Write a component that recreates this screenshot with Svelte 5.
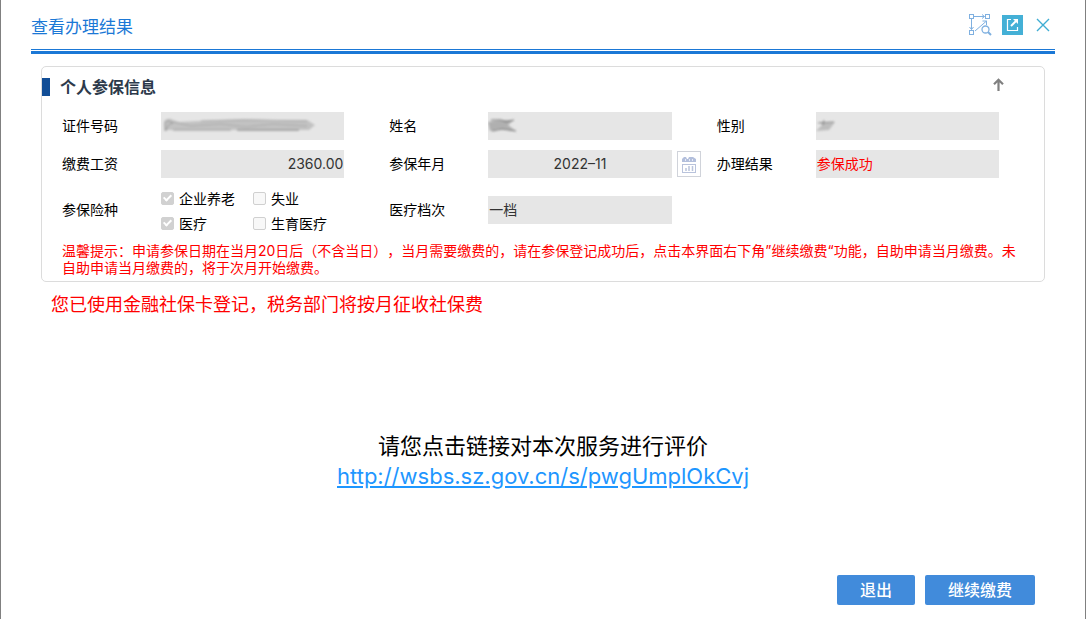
<script>
  let collapsed = $state(false);

  const insurances = [
    { id: "pension", label: "企业养老", checked: true },
    { id: "unemployment", label: "失业", checked: false },
    { id: "medical", label: "医疗", checked: true },
    { id: "maternity", label: "生育医疗", checked: false },
  ];

  const link = "http://wsbs.sz.gov.cn/s/pwgUmplOkCvj";

  function toggle() {
    collapsed = !collapsed;
  }
</script>

<div class="dialog">
  <header class="dialog-header">
    <h1>查看办理结果</h1>
    <div class="tools">
      <button type="button" class="tool" aria-label="流程图">
        <svg width="23" height="22" viewBox="0 0 23 22" fill="none" stroke="#7fb0e0">
          <rect x="0.5" y="0.5" width="4" height="4" />
          <rect x="16.5" y="0.5" width="4" height="4" />
          <rect x="0.5" y="16.5" width="4" height="4" />
          <path d="M5 2.5H15.500M13 0.500L15.500 2.500L13 4.500M2.500 5V15.500M0.500 13L2.500 15.500L4.500 13M6 17L17.500 7M13.500 7H17.500V11" />
          <circle cx="16.5" cy="15.5" r="3.5" stroke-width="1.3" />
          <path d="M19 18L22 21" stroke-width="2" />
        </svg>
      </button>
      <button type="button" class="tool open" aria-label="新窗口打开">
        <svg width="21" height="20" viewBox="0 0 21 20" fill="none" stroke="#fff" stroke-width="1.2">
          <path d="M9 4.500H5.500V15.500H15.500V12" />
          <path d="M9 11L14 6" stroke-width="2" />
          <path d="M11 4H16V9Z" fill="#fff" stroke="none" />
        </svg>
      </button>
      <button type="button" class="tool close" aria-label="关闭">
        <svg width="14" height="14" viewBox="0 0 14 14" fill="none" stroke="#3fadd3" stroke-width="1.4">
          <path d="M1 1L13 13M13 1L1 13" />
        </svg>
      </button>
    </div>
  </header>

  <main>
    <section class="card">
      <div class="card-header">
        <h2>个人参保信息</h2>
        <button type="button" class="toggle" aria-label="收起" aria-expanded={!collapsed} onclick={toggle}>
          <svg width="11" height="14" viewBox="0 0 11 14" fill="none" stroke="#808080" stroke-width="2.2">
            <path d="M5.5 13V2M1 6.2L5.5 1.7L10 6.2" />
          </svg>
        </button>
      </div>

      {#if !collapsed}
        <div class="form">
          <div class="item">
            <label for="idno">证件号码</label>
            <div class="field">
              <input id="idno" type="text" readonly />
              <svg class="smudge" width="160" height="20" viewBox="0 0 160 20" fill="none" aria-hidden="true">
                <defs>
                  <filter id="soft" x="-10%" y="-30%" width="120%" height="160%">
                    <feGaussianBlur stdDeviation="0.8" />
                  </filter>
                </defs>
                <g filter="url(#soft)">
                  <path d="M3 5Q7 1 12 4L18 6L38 5L56 4L82 3L112 4L146 4L154 9L148 14L110 14L84 14L40 14L14 14L4 14Z" fill="#c2c2c2" />
                  <path d="M4 15V7Q7 3 12 7Q6 8 5 15M12 14L36 14L70 14" stroke="#999" />
                  <path d="M12 6L30 10L60 8L85 11L112 8L146 10M40 5L88 4L146 5" stroke="#aaa" />
                  <path d="M76 14L102 14L138 14" stroke="#777" />
                </g>
              </svg>
            </div>
            <div class="after"></div>
          </div>

          <div class="item">
            <label for="name">姓名</label>
            <div class="field">
              <input id="name" type="text" readonly />
              <svg class="smudge" width="32" height="20" viewBox="0 0 32 20" fill="none" aria-hidden="true">
                <g filter="url(#soft)">
                  <path d="M0 6L14 4L26 4L20 9L28 15L12 13L2 15Z" fill="#b0b0b0" />
                  <path d="M3 4H13L18 6L26 4M4 15L14 13L28 15" stroke="#757575" />
                </g>
              </svg>
            </div>
            <div class="after"></div>
          </div>

          <div class="item">
            <label for="gender">性别</label>
            <div class="field">
              <input id="gender" type="text" readonly />
              <svg class="smudge" width="24" height="20" viewBox="0 0 24 20" fill="none" aria-hidden="true">
                <g filter="url(#soft)">
                  <path d="M4 6L19 6L13 14L0 15L6 9Z" fill="#bdbdbd" />
                  <path d="M2 7L18 6M8 4L7 9" stroke="#858585" />
                </g>
              </svg>
            </div>
            <div class="after"></div>
          </div>

          <div class="item">
            <label for="wage">缴费工资</label>
            <div class="field">
              <input id="wage" class="right" type="text" value="2360.00" readonly />
            </div>
            <div class="after"></div>
          </div>

          <div class="item">
            <label for="month">参保年月</label>
            <div class="field">
              <input id="month" class="center" type="text" value="2022–11" readonly />
            </div>
            <div class="after">
              <button type="button" class="calendar" aria-label="选择日期">
                <svg width="14" height="17" viewBox="0 0 14 17" fill="none" stroke="#b9c3dc">
                  <path d="M0 6V3L2 1H4L5 3H6L7 1H11L14 3V6Z" fill="#b3bfdc" stroke="none" />
                  <path d="M3.5 3V5M7.5 3V5M10.5 3V5" stroke="#e8ecf6" />
                  <rect x="0.5" y="8.5" width="13" height="8" />
                  <path d="M4 12V15M7 10V15M10.5 10V15" stroke-width="1.5" />
                </svg>
              </button>
            </div>
          </div>

          <div class="item">
            <label for="result">办理结果</label>
            <div class="field">
              <input id="result" class="red" type="text" value="参保成功" readonly />
            </div>
            <div class="after"></div>
          </div>

          <div class="item tall" role="group" aria-labelledby="types">
            <span id="types" class="label">参保险种</span>
            <div class="checks">
              {#each insurances as item}
                <label class="check" for={item.id}>
                  <input id={item.id} type="checkbox" checked={item.checked} disabled />
                  {item.label}
                </label>
              {/each}
            </div>
          </div>

          <div class="item tall">
            <label for="level">医疗档次</label>
            <div class="field">
              <input id="level" type="text" value="一档" readonly />
            </div>
            <div class="after"></div>
          </div>
        </div>

        <p class="tip">
          温馨提示：申请参保日期在当月20日后（不含当日），当月需要缴费的，请在参保登记成功后，点击本界面右下角”继续缴费“功能，自助申请当月缴费。未自助申请当月缴费的，将于次月开始缴费。
        </p>
      {/if}
    </section>

    <p class="notice">您已使用金融社保卡登记，税务部门将按月征收社保费</p>

    <div class="survey">
      <p>请您点击链接对本次服务进行评价</p>
      <a href={link}>{link}</a>
    </div>
  </main>

  <footer class="actions">
    <button type="button">退出</button>
    <button type="button">继续缴费</button>
  </footer>
</div>

<style>
  :global(body) {
    margin: 0;
    background: #fff;
    color: #000;
    font-family: Inter, "Noto Sans CJK SC", sans-serif;
    font-size: 14px;
  }

  h1,
  h2,
  p {
    margin: 0;
  }

  button {
    padding: 0;
    border: none;
    background: transparent;
    font-family: inherit;
    cursor: pointer;
  }

  svg {
    display: block;
  }

  .dialog {
    display: flex;
    flex-direction: column;
    box-sizing: border-box;
    min-height: 100vh;
    padding: 0 30px 14px;
    border-left: 1px solid #808080;
    border-right: 1px solid #808080;
  }

  .dialog-header {
    display: flex;
    align-items: center;
    justify-content: space-between;
    height: 49px;
    padding-right: 5px;
  }

  /* thin line over a thick one */
  .dialog-header + main::before {
    content: "";
    display: block;
    height: 1px;
    margin: 0 -10px 12px;
    border-top: 1px solid #1b78d6;
    border-bottom: 3px solid #1b78d6;
  }

  h1 {
    padding-top: 4px;
    color: #1b78d6;
    font-size: 17px;
    font-weight: 400;
    line-height: 24px;
  }

  .tools {
    display: flex;
    align-items: center;
    gap: 10px;
  }

  .open {
    background: #44b0d6;
  }

  .close {
    padding-left: 3px;
  }

  main {
    flex: 1;
    padding: 0 10px;
  }

  .card {
    padding-bottom: 5px;
    border: 1px solid #dcdcdc;
    border-radius: 5px;
  }

  .card-header {
    display: flex;
    align-items: center;
    justify-content: space-between;
    height: 40px;
    padding-right: 40px;
  }

  .toggle {
    padding-bottom: 4px;
  }

  h2 {
    padding-left: 10px;
    border-left: 8px solid #114d96;
    color: #2d3a4b;
    font-size: 16px;
    font-weight: 700;
    line-height: 18px;
  }

  .form {
    display: grid;
    grid-template-columns: repeat(3, 1fr);
    padding-left: 20px;
  }

  .item {
    display: flex;
    align-items: center;
    height: 38px;
  }

  .item.tall {
    height: 54px;
  }

  .item > label,
  .label {
    flex: 0 0 99px;
    padding-bottom: 2px;
  }

  .field {
    position: relative;
    flex: 1;
    min-width: 0;
  }

  .after {
    box-sizing: border-box;
    flex: 0 0 45px;
    padding-left: 5px;
  }

  .field input {
    display: block;
    box-sizing: border-box;
    width: 100%;
    height: 28px;
    padding: 0 1px 2px;
    border: none;
    outline: none;
    background: #e6e6e6;
    color: #333;
    font-family: inherit;
    font-size: 14px;
  }

  .field input.right {
    text-align: right;
  }

  .field input.center {
    text-align: center;
  }

  .field input.red {
    color: #f00;
  }

  .smudge {
    position: absolute;
    top: 4px;
    left: 0;
    pointer-events: none;
  }

  .calendar {
    display: flex;
    align-items: center;
    justify-content: center;
    box-sizing: border-box;
    width: 24px;
    height: 26px;
    border: 1px solid #d0d3da;
    background: #fff;
  }

  .checks {
    display: grid;
    grid-template-columns: 92px 92px;
    grid-auto-rows: 25px;
  }

  .check {
    display: flex;
    align-items: center;
    gap: 5px;
    white-space: nowrap;
  }

  .check input {
    appearance: none;
    position: relative;
    width: 13px;
    height: 13px;
    margin: 2px 0 0;
    border: 1px solid #d0d0d0;
    border-radius: 2px;
    background: #f8f8f8;
  }

  .check input:checked {
    border-color: #d1d1d1;
    background: #d1d1d1;
  }

  .check input:checked::after {
    content: "";
    position: absolute;
    top: 0;
    left: 3px;
    width: 3px;
    height: 6px;
    border: solid #fff;
    border-width: 0 2px 2px 0;
    transform: rotate(45deg);
  }

  .tip {
    padding: 5px 20px 0;
    color: #f00;
    line-height: 17px;
    text-spacing-trim: space-all;
  }

  .notice {
    padding: 10px 10px 0;
    color: #f00;
    font-size: 18px;
    line-height: 26px;
  }

  .survey {
    padding-top: 113px;
    font-size: 22px;
    line-height: 30px;
    text-align: center;
  }

  .survey a {
    color: #1e96ff;
  }

  .actions {
    display: flex;
    justify-content: flex-end;
    gap: 10px;
    padding-right: 20px;
  }

  .actions button {
    height: 30px;
    padding: 0 23px 2px;
    border-radius: 2px;
    background: #418bdb;
    color: #fff;
    font-size: 16px;
    font-weight: 500;
  }
</style>
